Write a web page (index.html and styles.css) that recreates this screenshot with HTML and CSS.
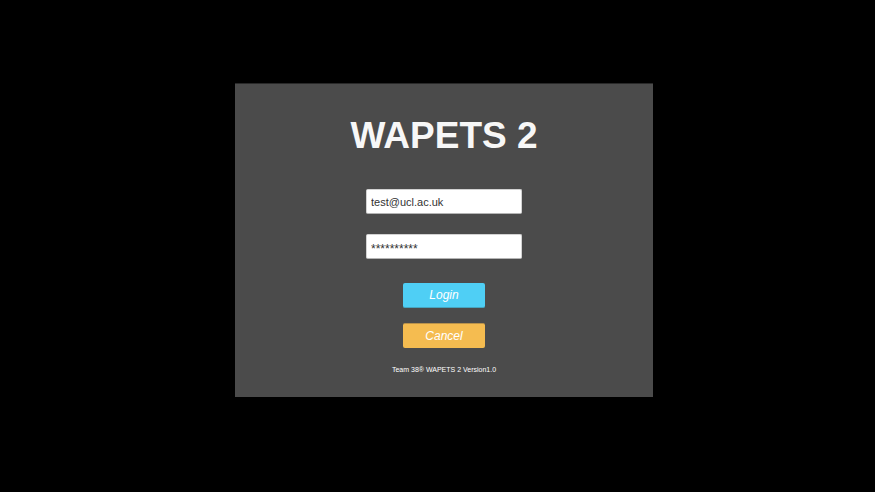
FILE: index.html
```html
<!DOCTYPE html>
<html lang="en">
<head>
<meta charset="utf-8">
<title>WAPETS 2</title>
<link rel="stylesheet" href="styles.css">
</head>
<body>
<main class="panel">
  <h1 class="title">WAPETS 2</h1>
  <form class="form">
    <input class="field" type="email" aria-label="Email" value="test@ucl.ac.uk">
    <input class="field masked" type="text" aria-label="Password" value="**********">
    <button class="button login" type="button">Login</button>
    <button class="button cancel" type="button">Cancel</button>
  </form>
  <p class="version">Team 38® WAPETS 2 Version1.0</p>
</main>
</body>
</html>
```

FILE: styles.css
```css
* { box-sizing: border-box; }
body {
  margin: 0;
  min-height: 100vh;
  padding: 83px 222px 94px 235px;
  background: #000;
  font-family: "Liberation Sans", Arial, sans-serif;
}
.panel {
  display: flex;
  flex-direction: column;
  align-items: center;
  padding: 32px 0 21px;
  border-top: 1px solid #292929;
  background: #4b4b4b;
}
.title {
  margin: 0;
  font-size: 37px;
  line-height: 40px;
  color: #f7f7f7;
}
.form {
  display: flex;
  flex-direction: column;
  align-items: center;
  margin-top: 33px;
}
.field {
  width: 156px;
  height: 25px;
  margin-bottom: 20px;
  padding: 1px 4px 0;
  border: 1px solid #d2d2d2;
  border-bottom-color: #b4b4b4;
  border-radius: 2px;
  background: #fff;
  color: #323232;
  font: 11px "Liberation Sans", Arial, sans-serif;
}
.masked {
  padding-top: 5px;
  font-size: 12px;
}
.button {
  width: 82px;
  height: 25px;
  padding: 0;
  border: 0;
  border-radius: 2px;
  color: #fff;
  font: italic 12px "Liberation Sans", Arial, sans-serif;
}
.login {
  margin-top: 4px;
  border-bottom: 1px solid #46a5c0;
  background: #4fcff5;
}
.cancel {
  margin-top: 15px;
  border-top: 1px solid #b9924b;
  background: #f5bc50;
}
.version {
  margin: 16px 0 0;
  font-size: 7px;
  line-height: 12px;
  color: #fff;
}
```
